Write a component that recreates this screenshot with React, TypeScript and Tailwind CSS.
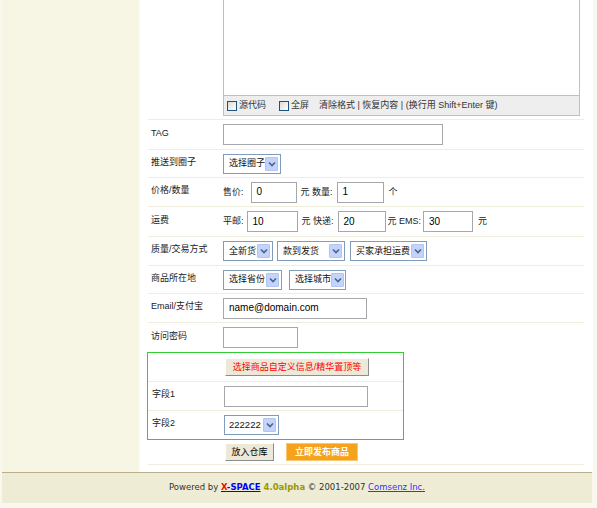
import React from 'react';

const FONT = "font-['Liberation_Sans','Noto_Sans_CJK_SC',sans-serif]";

function Chevron() {
  return (
    <svg width="8" height="6" viewBox="0 0 8 6" className="block">
      <path d="M1 1.5 L4 4.5 L7 1.5" fill="none" stroke="#4d6185" strokeWidth="1.6" />
    </svg>
  );
}

function Select({
  text,
  className,
  size = 'text-[9px] pl-[5px]',
}: {
  text: string;
  className: string;
  size?: string;
}) {
  return (
    <div
      className={`flex h-[20px] shrink-0 items-center justify-between whitespace-nowrap border border-[#7f9db9] bg-white pr-[2px] leading-none text-[#111] ${size} ${className}`}
    >
      <span>{text}</span>
      <span className="flex h-[14px] w-[13px] shrink-0 items-center justify-center rounded-[1px] border border-[#b1c4f2] bg-[#c3d3fb]">
        <Chevron />
      </span>
    </div>
  );
}

function Input({ value, className }: { value?: string; className: string }) {
  return (
    <div
      className={`flex h-[21px] shrink-0 items-center whitespace-nowrap border border-[#a7a6aa] bg-white pl-[5px] text-[10px] leading-none text-black ${className}`}
    >
      {value}
    </div>
  );
}

function Row({
  label,
  h,
  children,
}: {
  label: string;
  h: string;
  children?: React.ReactNode;
}) {
  return (
    <div className={`flex items-center border-t border-[#efeedd] ${h}`}>
      <div className="w-[75px] shrink-0 whitespace-nowrap pb-[3px] pl-[3px] text-[9px] leading-none text-[#222]">{label}</div>
      <div className="flex items-center whitespace-nowrap text-[9px] leading-none text-[#222]">{children}</div>
    </div>
  );
}

function CheckBox() {
  return <span className="inline-block h-[10px] w-[10px] shrink-0 border border-[#1c5180] bg-gradient-to-br from-[#dcdcd7] to-white" />;
}

export default function App() {
  return (
    <div className={`h-[508px] w-[597px] overflow-hidden bg-[#faf8ee] ${FONT}`}>
      <div className="ml-[2px] flex h-[472px] w-[591px]">
        <div className="w-[138px] shrink-0 border-r border-[#fbfaf2] bg-[#f7f5e3]" />
        <div className="w-[453px] shrink-0 bg-white">
          <div className="ml-[8px] w-[436px]">
            {/* editor */}
            <div className="flex h-[119px]">
              <div className="w-[75px] shrink-0" />
              <div className="w-[357px] shrink-0">
                <div className="h-[95px] border-x border-[#c0c0c0] bg-white" />
                <div className="flex h-[21px] items-center gap-[2px] whitespace-nowrap border border-[#c0c0c0] bg-[#eeeeee] pl-[3px] text-[9px] leading-none text-[#333]">
                  <CheckBox />
                  <span>源代码</span>
                  <span className="ml-[9px]" />
                  <CheckBox />
                  <span>全屏</span>
                  <span className="ml-[8px]">清除格式 | 恢复内容 | (换行用 Shift+Enter 键)</span>
                </div>
              </div>
            </div>

            <Row label="TAG" h="h-[30px]">
              <Input className="w-[220px]" />
            </Row>
            <Row label="推送到圈子" h="h-[28px]">
              <Select text="选择圈子" className="w-[58px]" />
            </Row>
            <Row label="价格/数量" h="h-[29px]">
              <span className="mr-[7px]">售价:</span>
              <Input value="0" className="w-[46px]" />
              <span className="mx-[4px]">元 数量:</span>
              <Input value="1" className="w-[47px]" />
              <span className="ml-[5px]">个</span>
            </Row>
            <Row label="运费" h="h-[30px]">
              <span className="mr-[3px]">平邮:</span>
              <Input value="10" className="w-[51px]" />
              <span className="mx-[4px]">元 快递:</span>
              <Input value="20" className="w-[48px]" />
              <span className="mx-[2px]">元 EMS:</span>
              <Input value="30" className="w-[50px]" />
              <span className="ml-[5px]">元</span>
            </Row>
            <Row label="质量/交易方式" h="h-[29px]">
              <Select text="全新货" className="w-[50px]" />
              <Select text="款到发货" className="ml-[4px] w-[68px]" />
              <Select text="买家承担运费" className="ml-[5px] w-[77px]" />
            </Row>
            <Row label="商品所在地" h="h-[28px]">
              <Select text="选择省份" className="w-[59px]" />
              <Select text="选择城市" className="ml-[7px] w-[57px]" />
            </Row>
            <Row label="Email/支付宝" h="h-[29px]">
              <Input value="name@domain.com" className="w-[144px]" />
            </Row>
            <Row label="访问密码" h="h-[30px]">
              <Input className="w-[75px]" />
            </Row>

            {/* custom fields */}
            <div className="-ml-[1px] w-[257px] border border-[#33cc33]">
              <div className="flex h-[28px] items-center">
                <div className="w-[77px] shrink-0" />
                <button className="flex h-[18px] w-[144px] items-center justify-center whitespace-nowrap border border-t-white border-l-white border-r-[#8c8c8c] border-b-[#8c8c8c] bg-[#ece9d8] text-[9px] leading-none text-[#ff0000]">
                  选择商品自定义信息/精华置顶等
                </button>
              </div>
              <div className="flex h-[29px] items-center border-t border-[#efeedd]">
                <div className="w-[76px] shrink-0 pb-[3px] pl-[4px] text-[9px] leading-none text-[#222]">字段1</div>
                <Input className="w-[144px]" />
              </div>
              <div className="flex h-[29px] items-center border-t border-[#efeedd]">
                <div className="w-[76px] shrink-0 pb-[3px] pl-[4px] text-[9px] leading-none text-[#222]">字段2</div>
                <Select text="222222" className="w-[55px]" size="text-[9.5px] pl-[4px]" />
              </div>
            </div>

            <div className="flex h-[25px] items-start border-b border-[#f1eee0] pl-[77px] pt-[3px]">
              <button className="flex h-[18px] w-[49px] items-center justify-center whitespace-nowrap border border-t-white border-l-white border-r-[#8c8c8c] border-b-[#8c8c8c] bg-[#ece9d8] text-[9px] leading-none text-black">
                放入仓库
              </button>
              <button className="ml-[12px] flex h-[18px] w-[72px] items-center justify-center whitespace-nowrap border border-[#fbc670] bg-[#f5a21c] text-[9px] font-bold leading-none text-white">
                立即发布商品
              </button>
            </div>
          </div>
        </div>
      </div>

      <div className="ml-[2px] flex h-[31px] w-[590px] items-center justify-center whitespace-nowrap border-t border-[#b9b08b] bg-[#eeecd5] pb-[1px] font-['DejaVu_Sans',sans-serif] text-[8.5px] leading-none text-[#333]">
        <span>Powered by&nbsp;</span>
        <span className="font-bold text-[#0000ff] underline">
          <span className="text-[#ff0000]">X</span>-SPACE
        </span>
        <span className="font-bold text-[#999900]">&nbsp;4.0alpha</span>
        <span>&nbsp;© 2001-2007&nbsp;</span>
        <span className="text-[#3333ff] underline">Comsenz Inc.</span>
      </div>
    </div>
  );
}
